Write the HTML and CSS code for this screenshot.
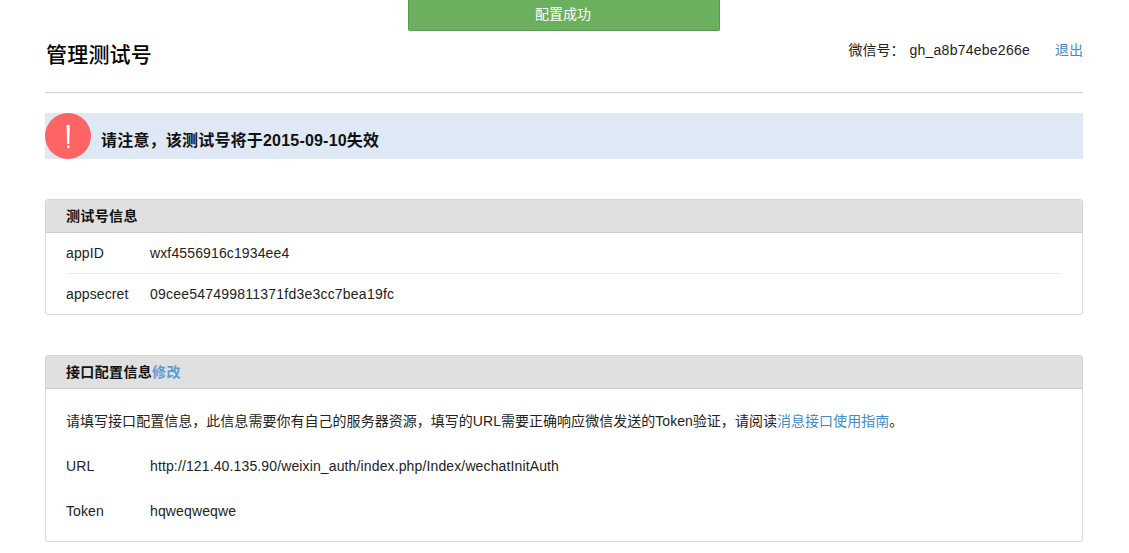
FILE: index.html
```html
<!DOCTYPE html>
<html lang="zh-CN">
<head>
<meta charset="utf-8">
<title>管理测试号</title>
<link rel="stylesheet" href="styles.css">
</head>
<body>
<div class="toast">配置成功</div>
<main class="page">
  <header class="head">
    <h1 class="title">管理测试号</h1>
    <div class="account">
      <span class="account-label">微信号：</span><span class="account-id">gh_a8b74ebe266e</span><a class="link logout" href="#">退出</a>
    </div>
  </header>
  <div class="notice">
    <span class="notice-icon"><svg width="46" height="46" viewBox="0 0 46 46"><circle cx="23" cy="23" r="23" fill="#ff6465"/><path d="M21.6 12h3.2l-.5 19h-2.2z" fill="#fff"/><rect x="22" y="32.5" width="2.4" height="2.6" fill="#fff"/></svg></span>
    <strong class="notice-text">请注意，该测试号将于2015-09-10失效</strong>
  </div>
  <section class="panel">
    <h2 class="panel-head">测试号信息</h2>
    <div class="panel-body">
      <div class="info-row"><span class="label">appID</span><span class="value">wxf4556916c1934ee4</span></div>
      <div class="info-row"><span class="label">appsecret</span><span class="value secret">09cee547499811371fd3e3cc7bea19fc</span></div>
    </div>
  </section>
  <section class="panel">
    <h2 class="panel-head">接口配置信息<a class="link head-link" href="#">修改</a></h2>
    <div class="panel-body config">
      <p class="desc">请填写接口配置信息，此信息需要你有自己的服务器资源，填写的URL需要正确响应微信发送的Token验证，请阅读<a class="link" href="#">消息接口使用指南</a>。</p>
      <div class="config-row"><span class="label">URL</span><span class="value">http://121.40.135.90/weixin_auth/index.php/Index/wechatInitAuth</span></div>
      <div class="config-row"><span class="label">Token</span><span class="value">hqweqweqwe</span></div>
    </div>
  </section>
</main>
</body>
</html>
```
FILE: styles.css
```css
* { box-sizing: border-box; }
html, body { margin: 0; padding: 0; }
body {
  background: #fff;
  color: #222;
  font-family: "Liberation Sans", "Noto Sans CJK SC", sans-serif;
  font-size: 14px;
  line-height: 20px;
}
.link { color: #428bca; text-decoration: none; }
.head-link { color: #5a9bd8; }
.toast {
  position: absolute;
  left: 408px;
  top: 0;
  width: 312px;
  height: 31px;
  padding-right: 2px;
  line-height: 29px;
  background: #6bb05f;
  border: 1px solid #5a9a50;
  border-top: 0;
  border-radius: 0 0 2px 2px;
  color: #fff;
  text-align: center;
}
.page { margin: 0 46px 0 45px; }
.head {
  display: flex;
  justify-content: space-between;
  height: 93px;
  border-bottom: 1px solid #d3d3d3;
}
.title {
  margin: 41px 0 0 1px;
  font-size: 21px;
  line-height: 28px;
  font-weight: 500;
  letter-spacing: .2px;
  color: #000;
}
.account { margin-top: 40px; }
.account-label { margin-right: 5px; }
.account-id { letter-spacing: .25px; }
.logout { margin-left: 25px; }
.notice {
  display: flex;
  align-items: flex-end;
  height: 46px;
  margin-top: 20px;
  background: #dfe8f5;
}
.notice-icon { display: block; height: 46px; }
.notice-text {
  margin: 0 0 8px 10px;
  font-size: 16px;
  letter-spacing: .2px;
  color: #111;
}
.panel {
  margin-top: 40px;
  border: 1px solid #d5d5d5;
  border-radius: 3px;
  overflow: hidden;
}
.panel-head {
  height: 33px;
  margin: 0;
  padding: 0 20px;
  background: #e0e0e0;
  border-bottom: 1px solid #cfcfcf;
  font-size: 14px;
  line-height: 33px;
  font-weight: 700;
  letter-spacing: .35px;
  color: #111;
}
.panel-body { padding: 0 20px; }
.label { display: inline-block; width: 84px; letter-spacing: .1px; }
.value { letter-spacing: .13px; }
.secret { letter-spacing: .22px; }
.info-row {
  height: 41px;
  line-height: 40px;
  border-bottom: 1px solid #ececec;
}
.info-row:last-child { height: 40px; border-bottom: 0; }
.config { padding-top: 22px; height: 152px; }
.desc { margin: 0; letter-spacing: .03px; }
.config-row { margin-top: 25px; height: 20px; }
```
